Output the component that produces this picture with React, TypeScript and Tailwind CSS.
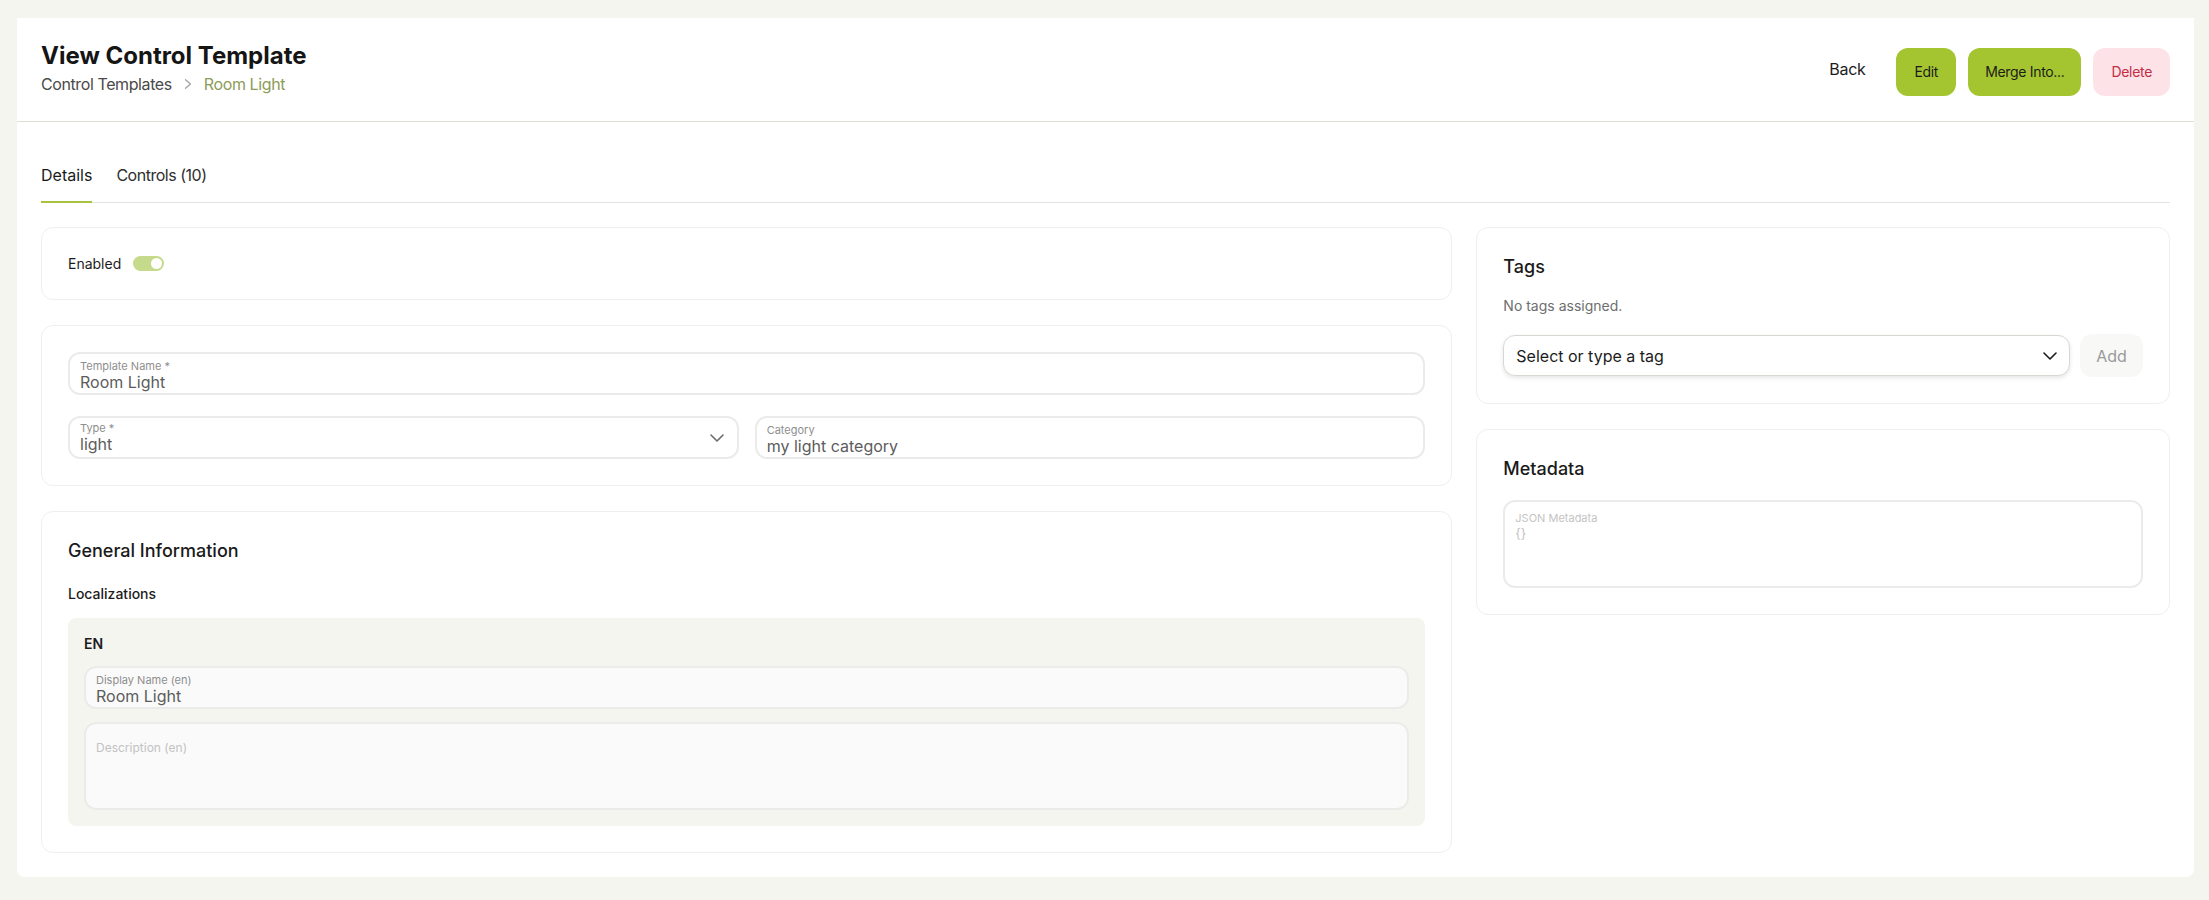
import { ReactNode } from 'react';

function Chevron({ className }: { className?: string }) {
  return (
    <svg width="14" height="8" viewBox="0 0 14 8" fill="none" className={className}>
      <path d="M1 1l6 6 6-6" stroke="currentColor" strokeWidth="1.6" strokeLinecap="round" strokeLinejoin="round" />
    </svg>
  );
}

function Card({ children }: { children: ReactNode }) {
  return <div className="rounded-xl border border-[#f0efeb] bg-white p-[26px]">{children}</div>;
}

function Field({ label, value, muted = false }: { label: string; value: string; muted?: boolean }) {
  return (
    <div
      className={`h-[43px] rounded-xl border-2 border-[#ebebe9] px-[10px] pt-[5px] ${
        muted ? 'bg-[#fafafa]' : 'bg-white'
      }`}
    >
      <div className="text-[11px] leading-[14px] text-[#8e8e8e]">{label}</div>
      <div className="text-base leading-[18px] text-[#5c5c5c]">{value}</div>
    </div>
  );
}

function SelectField({ label, value }: { label: string; value: string }) {
  return (
    <div className="flex h-[43px] items-center justify-between rounded-xl border-2 border-[#ebebe9] bg-white pl-[10px] pr-[13px]">
      <div className="self-start pt-[3px]">
        <div className="text-[11px] leading-[14px] text-[#8e8e8e]">{label}</div>
        <div className="text-base leading-[18px] text-[#5c5c5c]">{value}</div>
      </div>
      <Chevron className="text-[#6b6b6b]" />
    </div>
  );
}

export default function App() {
  return (
    <div className="min-h-screen bg-[#f5f5f0] pl-[17px] pr-[15px] pt-[18px] pb-[22px] font-['Inter',sans-serif] text-[#1c1c1c]">
      <div className="rounded-b-lg bg-white">
        {/* Header */}
        <div className="flex items-end justify-between border-b border-[#e0ded6] px-6 pt-[22px] pb-[25px]">
          <div>
            <h1 className="text-2xl font-bold leading-8 text-[#151515]">View Control Template</h1>
            <div className="flex items-center gap-3 text-base leading-6 tracking-[-0.025em]">
              <span className="text-[#4a4a4a]">Control Templates</span>
              <svg width="8" height="10" viewBox="0 0 8 10" fill="none">
                <path d="M1.5 0.7L6.5 5l-5 4.3" stroke="#a0a0a0" strokeWidth="1.2" strokeLinecap="round" strokeLinejoin="round" />
              </svg>
              <span className="text-[#8c9c58]">Room Light</span>
            </div>
          </div>
          <div className="flex items-center gap-3 tracking-[-0.02em]">
            <button className="h-12 px-[19px] pb-1.5 text-base text-[#1c1c1c]">Back</button>
            <button className="h-12 rounded-xl bg-[#a4c52f] px-[18px] text-sm text-[#1c1c1c]">Edit</button>
            <button className="h-12 rounded-xl bg-[#a4c52f] px-[17px] text-sm text-[#1c1c1c]">Merge Into...</button>
            <button className="h-12 rounded-xl bg-[#fde3e8] px-[18px] text-sm text-[#c42c44]">Delete</button>
          </div>
        </div>

        <div className="px-6 pt-6 pb-6">
          {/* Tabs */}
          <div className="flex gap-6 border-b border-[#e3e3e0]">
            <button className="-mb-px border-b-2 border-[#a8c23f] pt-[17px] pb-[14px] text-base leading-6 text-[#1a1a1a]">
              Details
            </button>
            <button className="-mb-px border-b-2 border-transparent pt-[17px] pb-[14px] text-base leading-6 tracking-[-0.03em] text-[#2e2e2e]">
              Controls (10)
            </button>
          </div>

          <div className="mt-6 grid grid-cols-3 items-start gap-6">
            {/* Main column */}
            <div className="col-span-2 flex flex-col gap-[25px]">
              <Card>
                <div className="flex h-[19px] items-center gap-3">
                  <span className="text-sm text-[#1c1c1c]">Enabled</span>
                  <div className="flex h-[15px] w-[31px] items-center justify-end rounded-full bg-[#c5db8b] pr-[2px]">
                    <div className="h-[11px] w-[11px] rounded-full bg-white" />
                  </div>
                </div>
              </Card>

              <Card>
                <div className="flex flex-col gap-[21px]">
                  <Field label="Template Name *" value="Room Light" />
                  <div className="grid grid-cols-2 gap-4">
                    <SelectField label="Type *" value="light" />
                    <Field label="Category" value="my light category" />
                  </div>
                </div>
              </Card>

              <Card>
                <h2 className="text-lg font-medium leading-[26px] text-[#1a1a1a]">General Information</h2>
                <div className="mt-5 text-sm font-medium leading-5 text-[#1c1c1c]">Localizations</div>
                <div className="mt-3.5 rounded-lg bg-[#f5f5f0] p-4">
                  <div className="text-sm font-semibold leading-5 text-[#1c1c1c]">EN</div>
                  <div className="mt-3 flex flex-col gap-[13px]">
                    <Field label="Display Name (en)" value="Room Light" muted />
                    <div className="h-[88px] rounded-xl border-2 border-[#ebebe9] bg-[#fafafa] px-[10px] pt-4">
                      <div className="text-xs leading-4 text-[#c2c2c2]">Description (en)</div>
                    </div>
                  </div>
                </div>
              </Card>
            </div>

            {/* Side column */}
            <div className="flex flex-col gap-[25px]">
              <Card>
                <h2 className="text-lg font-medium leading-[26px] text-[#1a1a1a]">Tags</h2>
                <p className="mt-4 text-sm leading-5 text-[#6e6e6e]">No tags assigned.</p>
                <div className="mt-[18px] flex items-center gap-2.5">
                  <div className="flex h-[41px] flex-1 items-center justify-between rounded-xl border border-[#d8d8d3] bg-white px-3 shadow-[0_2px_4px_rgba(0,0,0,0.1)]">
                    <span className="text-base text-[#1c1c1c]">Select or type a tag</span>
                    <Chevron className="text-[#1c1c1c]" />
                  </div>
                  <button className="h-[43px] w-[63px] rounded-xl bg-[#f8f8f6] text-base text-[#9a9a9a]">Add</button>
                </div>
              </Card>

              <Card>
                <h2 className="text-lg font-medium leading-[26px] text-[#1a1a1a]">Metadata</h2>
                <div className="mt-[18px] h-[88px] rounded-xl border-2 border-[#ebebe9] bg-white px-[10px] pt-[9px]">
                  <div className="text-[11px] leading-[14px] text-[#c4c4c4]">JSON Metadata</div>
                  <div className="text-[13px] leading-4 text-[#c4c4c4]">{'{}'}</div>
                </div>
              </Card>
            </div>
          </div>
        </div>
      </div>
    </div>
  );
}
